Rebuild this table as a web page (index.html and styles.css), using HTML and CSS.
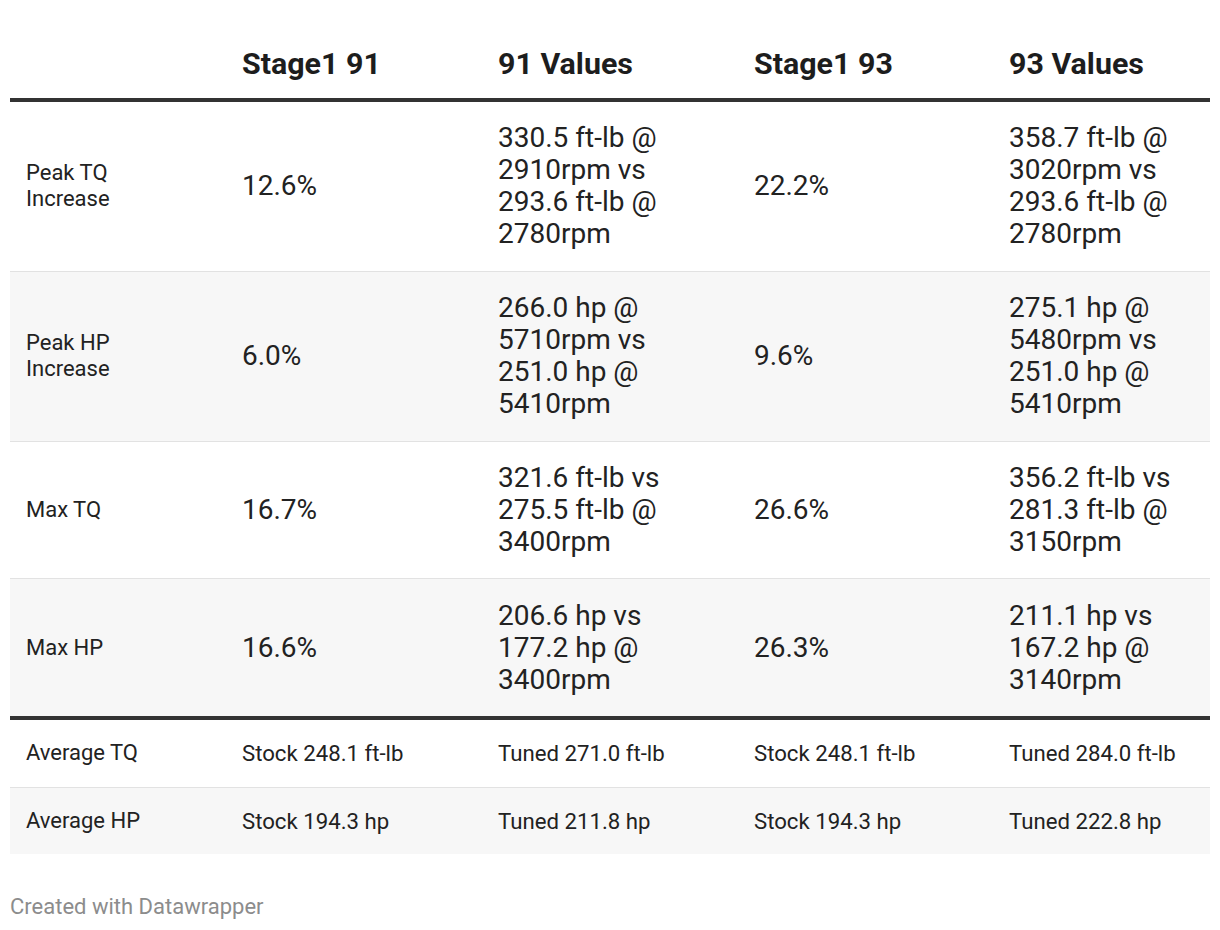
FILE: index.html
```html
<!DOCTYPE html>
<html lang="en">
<head>
<meta charset="utf-8">
<title>Stage1 91 vs 93</title>
<link rel="stylesheet" href="styles.css">
</head>
<body>
<div class="chart">
  <table class="dw-table">
    <colgroup>
      <col class="c-label">
      <col class="c-mid">
      <col class="c-mid">
      <col class="c-mid3">
      <col class="c-last">
    </colgroup>
    <thead>
      <tr>
        <th class="label"></th>
        <th>Stage1 91</th>
        <th>91 Values</th>
        <th>Stage1 93</th>
        <th>93 Values</th>
      </tr>
    </thead>
    <tbody class="main">
      <tr class="tall">
        <td class="label">Peak TQ<br>Increase</td>
        <td>12.6%</td>
        <td>330.5 ft-lb @<br>2910rpm vs<br>293.6 ft-lb @<br>2780rpm</td>
        <td>22.2%</td>
        <td>358.7 ft-lb @<br>3020rpm vs<br>293.6 ft-lb @<br>2780rpm</td>
      </tr>
      <tr class="tall alt">
        <td class="label">Peak HP<br>Increase</td>
        <td>6.0%</td>
        <td>266.0 hp @<br>5710rpm vs<br>251.0 hp @<br>5410rpm</td>
        <td>9.6%</td>
        <td>275.1 hp @<br>5480rpm vs<br>251.0 hp @<br>5410rpm</td>
      </tr>
      <tr>
        <td class="label">Max TQ</td>
        <td>16.7%</td>
        <td>321.6 ft-lb vs<br>275.5 ft-lb @<br>3400rpm</td>
        <td>26.6%</td>
        <td>356.2 ft-lb vs<br>281.3 ft-lb @<br>3150rpm</td>
      </tr>
      <tr class="alt last">
        <td class="label">Max HP</td>
        <td>16.6%</td>
        <td>206.6 hp vs<br>177.2 hp @<br>3400rpm</td>
        <td>26.3%</td>
        <td>211.1 hp vs<br>167.2 hp @<br>3140rpm</td>
      </tr>
    </tbody>
    <tbody class="summary">
      <tr>
        <td class="label">Average TQ</td>
        <td>Stock 248.1 ft-lb</td>
        <td>Tuned 271.0 ft-lb</td>
        <td>Stock 248.1 ft-lb</td>
        <td>Tuned 284.0 ft-lb</td>
      </tr>
      <tr class="alt last">
        <td class="label">Average HP</td>
        <td>Stock 194.3 hp</td>
        <td>Tuned 211.8 hp</td>
        <td>Stock 194.3 hp</td>
        <td>Tuned 222.8 hp</td>
      </tr>
    </tbody>
  </table>
  <div class="footer">Created with Datawrapper</div>
</div>
</body>
</html>
```
FILE: styles.css
```css
html, body {
  margin: 0;
  padding: 0;
  background: #ffffff;
}

body {
  font-family: Roboto, "Liberation Sans", Arial, sans-serif;
  color: #1d1d1d;
}

.chart {
  padding: 10px 10px 0 10px;
}

.dw-table {
  width: 1200px;
  border-collapse: collapse;
  table-layout: fixed;
}

.c-label { width: 222px; }
.c-mid { width: 256px; }
.c-mid3 { width: 255px; }
.c-last { width: 211px; }

.dw-table th {
  text-align: left;
  font-weight: 700;
  font-size: 30.4px;
  line-height: 36px;
  padding: 36px 10px 16px 10px;
  color: #1d1d1d;
  border-bottom: 4px solid #333333;
}

.dw-table td {
  text-align: left;
  vertical-align: middle;
  padding: 20.25px 10px 20.5px 10px;
  font-size: 28px;
  line-height: 32px;
  color: #222222;
}

.dw-table td.label,
.dw-table th.label {
  padding-left: 16px;
}

.dw-table td.label {
  font-size: 22px;
  line-height: 26px;
}

.main tr {
  border-bottom: 1px solid #e2e2e2;
}

.main tr.last {
  border-bottom: 4px solid #333333;
}

.summary td {
  font-size: 22.2px;
  line-height: 26px;
  padding: 20px 10px 20.5px 10px;
}

.summary tr {
  border-bottom: 1px solid #e2e2e2;
}

.summary tr.last {
  border-bottom: none;
}

tr.alt {
  background: #f7f7f7;
}

.footer {
  font-size: 22px;
  line-height: 26px;
  color: #8c8c8c;
  padding-top: 40px;
}
```
